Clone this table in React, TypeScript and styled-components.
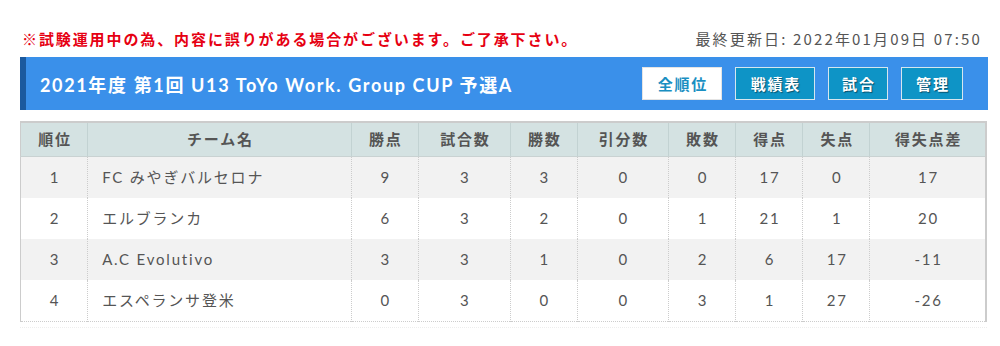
import React from "react";
import styled, { createGlobalStyle } from "styled-components";

const Global = createGlobalStyle`
  html, body { margin: 0; padding: 0; background: #fff; }
  body { font-family: "Lato", "Noto Sans CJK JP", sans-serif; color: #555; }
`;

const Page = styled.div`
  padding: 20px 12px 0 20px;
`;

const Notice = styled.div`
  display: flex;
  justify-content: space-between;
  align-items: center;
  height: 37px;
`;

const Warning = styled.div`
  font-family: "Noto Sans CJK JP", sans-serif;
  color: #e60012;
  font-weight: 700;
  font-size: 15px;
  letter-spacing: 1.9px;
  padding-left: 2px;
`;

const Updated = styled.div`
  font-family: "Noto Sans CJK JP", sans-serif;
  font-size: 15px;
  color: #555;
  padding-right: 6px;
  letter-spacing: 2.15px;
`;

const TitleBar = styled.div`
  display: flex;
  align-items: center;
  justify-content: space-between;
  height: 53px;
  background: #3a90ea;
  border-left: 6px solid #1b5a9f;
  padding: 0 25px 0 14px;
`;

const Title = styled.h1`
  margin: 0;
  color: #fff;
  font-size: 18px;
  font-weight: 700;
  letter-spacing: 1.65px;
  font-family: "Lato", "Noto Sans CJK JP", sans-serif;
`;

const Buttons = styled.div`
  display: flex;
  gap: 13px;
`;

const Btn = styled.a<{ $active?: boolean; $w: number }>`
  display: flex;
  align-items: center;
  justify-content: center;
  width: ${(p) => p.$w}px;
  height: 33px;
  box-sizing: border-box;
  font-family: "Noto Sans CJK JP", sans-serif;
  font-weight: 700;
  font-size: 15px;
  letter-spacing: 1.8px;
  text-indent: 1.8px;
  border: 1px solid ${(p) => (p.$active ? "#e4e4e4" : "#d6e6ee")};
  background: ${(p) => (p.$active ? "#fff" : "#0e94c6")};
  color: ${(p) => (p.$active ? "#1a8fc2" : "#fff")};
  text-shadow: ${(p) => (p.$active ? "none" : "1px 1px 1px rgba(0,0,0,0.45)")};
`;

const TableWrap = styled.div`
  margin-top: 11px;
  padding-bottom: 5px;
  border-bottom: 1px dotted #eee;
  width: 967px;
`;

const Table = styled.table`
  width: 967px;
  border-collapse: collapse;
  table-layout: fixed;
  border-top: 2px solid #ccc;
  border-left: 1px solid #ccc;
  border-right: 2px solid #ccc;
  border-bottom: 1px dotted #ccc;
`;

const Th = styled.th<{ $w: number }>`
  width: ${(p) => ((p.$w / 967) * 100).toFixed(3)}%;
  height: 32px;
  padding: 0 0 1px;
  line-height: 20px;
  background: #d4e2e2;
  color: #555;
  font-family: "Noto Sans CJK JP", sans-serif;
  font-weight: 700;
  font-size: 15px;
  text-align: center;
  border-left: 1px solid #c2d2d2;
  border-bottom: 1px solid #c9d2d2;
  letter-spacing: 1.8px;
  text-indent: 1.8px;
  &:first-child { border-left: none; }
`;

const Tr = styled.tr<{ $odd: boolean }>`
  background: ${(p) => (p.$odd ? "#f2f2f2" : "#fff")};
  & + & td { border-top: 1px dotted #bbb; }
`;

const Td = styled.td<{ $left?: boolean }>`
  height: 39px;
  padding: 0 ${(p) => (p.$left ? "14px" : "0")} 2px;
  line-height: 20px;
  font-size: 15px;
  letter-spacing: 1.8px;
  text-indent: ${(p) => (p.$left ? "0" : "1.8px")};
  color: #555;
  font-family: "Lato", "Noto Sans CJK JP", sans-serif;
  text-align: ${(p) => (p.$left ? "left" : "center")};
  border-left: 1px dotted #ccc;
  &:first-child { border-left: none; }
`;

const cols = [
  { label: "順位", w: 67 },
  { label: "チーム名", w: 266 },
  { label: "勝点", w: 67 },
  { label: "試合数", w: 92 },
  { label: "勝数", w: 67 },
  { label: "引分数", w: 91 },
  { label: "敗数", w: 67 },
  { label: "得点", w: 67 },
  { label: "失点", w: 67 },
  { label: "得失点差", w: 116 },
];

const rows: (string | number)[][] = [
  [1, "FC みやぎバルセロナ", 9, 3, 3, 0, 0, 17, 0, 17],
  [2, "エルブランカ", 6, 3, 2, 0, 1, 21, 1, 20],
  [3, "A.C Evolutivo", 3, 3, 1, 0, 2, 6, 17, -11],
  [4, "エスペランサ登米", 0, 3, 0, 0, 3, 1, 27, -26],
];

const buttons = [
  { label: "全順位", w: 80, active: true },
  { label: "戦績表", w: 80 },
  { label: "試合", w: 60 },
  { label: "管理", w: 62 },
];

export default function App() {
  return (
    <Page>
      <Global />
      <Notice>
        <Warning>※試験運用中の為、内容に誤りがある場合がございます。ご了承下さい。</Warning>
        <Updated>最終更新日: 2022年01月09日 07:50</Updated>
      </Notice>
      <TitleBar>
        <Title>2021年度 第1回 U13 ToYo Work. Group CUP 予選A</Title>
        <Buttons>
          {buttons.map((b) => (
            <Btn key={b.label} $w={b.w} $active={b.active}>{b.label}</Btn>
          ))}
        </Buttons>
      </TitleBar>
      <TableWrap>
        <Table>
          <thead>
            <tr>
              {cols.map((c) => (
                <Th key={c.label} $w={c.w}>{c.label}</Th>
              ))}
            </tr>
          </thead>
          <tbody>
            {rows.map((r, i) => (
              <Tr key={i} $odd={i % 2 === 0}>
                {r.map((v, j) => (
                  <Td key={j} $left={j === 1}>{v}</Td>
                ))}
              </Tr>
            ))}
          </tbody>
        </Table>
      </TableWrap>
    </Page>
  );
}
